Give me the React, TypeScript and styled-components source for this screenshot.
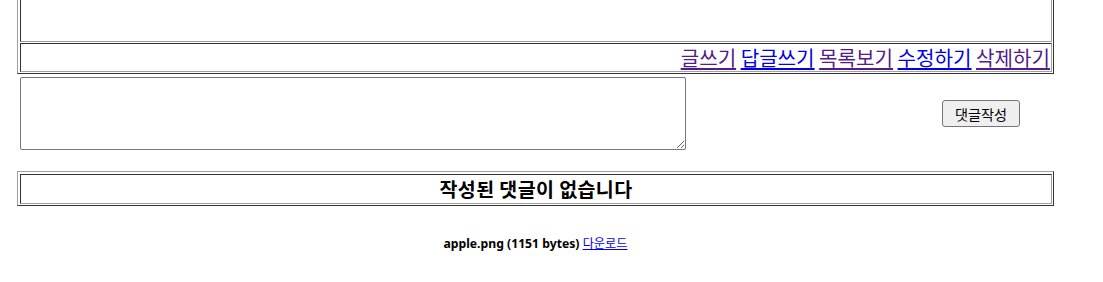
import React from 'react';
import styled, { createGlobalStyle } from 'styled-components';

const GlobalStyle = createGlobalStyle`
  body {
    margin: 0;
    background: #ffffff;
    font-family: "Noto Sans CJK KR", "Noto Sans", sans-serif;
    color: #000000;
    overflow: hidden;
  }
`;

const Page = styled.div`
  padding-left: 17px;
  width: 1037px;
`;

// Outset frame, like a bordered table
const Board = styled.div<{ $offset?: number }>`
  box-sizing: border-box;
  width: 1037px;
  margin-top: ${props => props.$offset ?? 0}px;
  border: 1px solid;
  border-color: #a0a0a0 #333333 #333333 #a0a0a0;
  padding: 2px 1px 1px 2px;
  display: flex;
  flex-direction: column;
  gap: 1px;
`;

// Inset cell inside a board
const Cell = styled.div<{ $align?: string; $height?: number }>`
  border: 1px solid;
  border-color: #333333 #a0a0a0 #a0a0a0 #333333;
  padding: 1px;
  text-align: ${props => props.$align ?? 'left'};
  ${props => (props.$height ? `height: ${props.$height}px;` : '')}
`;

const LinkBar = styled.div`
  font-size: 20.1px;
  line-height: 25px;
  white-space: nowrap;
`;

const NavLink = styled.a<{ $visited?: boolean }>`
  color: ${props => (props.$visited ? '#551a8b' : '#0000ee')};
  text-decoration: underline;
  cursor: pointer;
`;

const CommentRow = styled.div`
  display: flex;
  align-items: center;
  margin-top: 3px;
  padding-left: 3px;
`;

const CommentInput = styled.textarea`
  box-sizing: border-box;
  width: 666px;
  height: 73px;
  margin: 0;
  border: 1px solid #767676;
  border-radius: 2px;
  padding: 2px;
  font-family: "Liberation Mono", monospace;
  font-size: 13px;
`;

const SubmitButton = styled.button`
  box-sizing: border-box;
  margin-left: 256px;
  width: 78px;
  height: 27px;
  padding: 0 4px;
  background: #efefef;
  border: 1px solid #767676;
  border-radius: 3px;
  font-family: "Noto Sans CJK KR", sans-serif;
  font-size: 14.2px;
  line-height: 18px;
  color: #000000;
`;

const EmptyNotice = styled.div`
  font-size: 19.5px;
  font-weight: bold;
  letter-spacing: 0.4px;
  line-height: 26px;
`;

const FileInfo = styled.div`
  margin-top: 28px;
  text-align: center;
  font-family: "Noto Sans", "Noto Sans CJK KR", sans-serif;
  font-size: 12.2px;
  font-weight: bold;
  line-height: 18px;
`;

const FileLink = styled.a`
  color: #0000ee;
  text-decoration: underline;
  font-weight: normal;
  font-family: "Noto Sans CJK KR", sans-serif;
`;

const links = [
  { label: '글쓰기', visited: true },
  { label: '답글쓰기', visited: false },
  { label: '목록보기', visited: true },
  { label: '수정하기', visited: false },
  { label: '삭제하기', visited: true },
];

export default function App() {
  return (
    <>
      <GlobalStyle />
      <Page>
        <Board $offset={-25}>
          <Cell $height={60} />
          <Cell $align="right">
            <LinkBar>
              {links.map((link, i) => (
                <React.Fragment key={link.label}>
                  {i > 0 && ' '}
                  <NavLink $visited={link.visited}>{link.label}</NavLink>
                </React.Fragment>
              ))}
            </LinkBar>
          </Cell>
        </Board>

        <CommentRow>
          <CommentInput />
          <SubmitButton>댓글작성</SubmitButton>
        </CommentRow>

        <Board $offset={21}>
          <Cell $align="center">
            <EmptyNotice>작성된 댓글이 없습니다</EmptyNotice>
          </Cell>
        </Board>

        <FileInfo>
          apple.png (1151 bytes) <FileLink>다운로드</FileLink>
        </FileInfo>
      </Page>
    </>
  );
}
